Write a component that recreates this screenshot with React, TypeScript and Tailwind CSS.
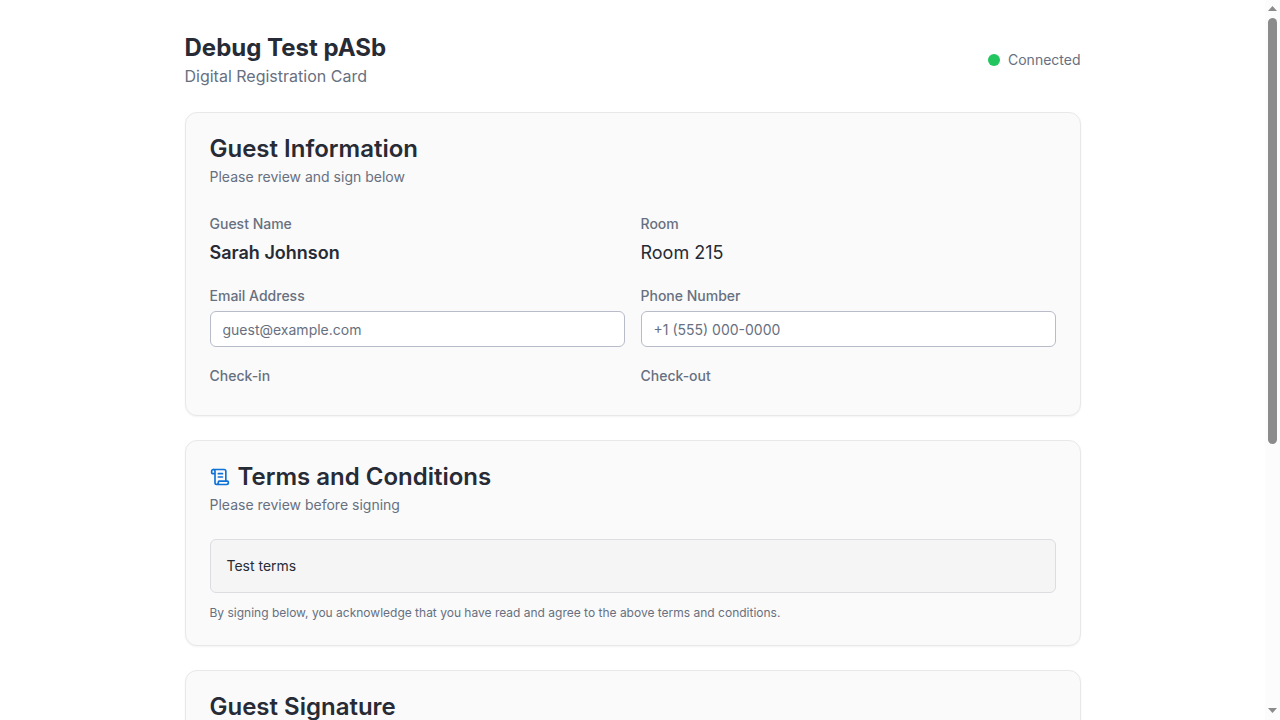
import { useEffect, useRef, useState } from "react";
import type { ReactNode } from "react";
import { ScrollText } from "lucide-react";

function Card({ title, description, icon, children }: { title: string; description?: string; icon?: ReactNode; children?: ReactNode }) {
  return (
    <section className="rounded-xl border border-[#e8e8ea] bg-[#fafafa] p-6 shadow-xs">
      <h2 className="flex items-center gap-2 text-2xl leading-none font-semibold">
        {icon}
        {title}
      </h2>
      {description && <p className="mt-1.5 text-sm text-[#677080]">{description}</p>}
      <div className="mt-6">{children}</div>
    </section>
  );
}

function Detail({ label, children }: { label: string; children?: ReactNode }) {
  return (
    <div>
      <dt>
        <span className="text-sm font-medium text-[#677080]">{label}</span>
      </dt>
      <dd className="mt-1 text-lg">{children}</dd>
    </div>
  );
}

function Field({ id, label, type, placeholder }: { id: string; label: string; type: string; placeholder: string }) {
  return (
    <div>
      <label htmlFor={id} className="text-sm font-medium text-[#677080]">
        {label}
      </label>
      <input
        id={id}
        type={type}
        placeholder={placeholder}
        className="mt-1 block h-9 w-full rounded-md border border-[#b8bbc8] bg-white px-3 text-sm placeholder:text-[#677080]"
      />
    </div>
  );
}

function Scrollbar({ size, offset }: { size: number; offset: number }) {
  return (
    <div aria-hidden="true" className="flex w-[15px] shrink-0 flex-col items-center bg-[#fcfcfc]">
      <svg className="h-[18px] w-[9px]" viewBox="0 0 9 18" fill="#8b8b8b">
        <path d="M4.5 6 9 11H0z" />
      </svg>
      <div className="min-h-0 w-[9px] flex-1">
        <div style={{ height: `${offset * 100}%` }} />
        <div className="rounded-full bg-[#8b8b8b]" style={{ height: `${size * 100}%` }} />
      </div>
      <svg className="h-[18px] w-[9px]" viewBox="0 0 9 18" fill="#8b8b8b">
        <path d="M0 6h9L4.5 11z" />
      </svg>
    </div>
  );
}

export default function App() {
  const viewport = useRef<HTMLDivElement>(null);
  const [thumb, setThumb] = useState({ size: 1, offset: 0 });

  const updateThumb = () => {
    const el = viewport.current;
    if (el) setThumb({ size: el.clientHeight / el.scrollHeight, offset: el.scrollTop / el.scrollHeight });
  };

  useEffect(() => {
    updateThumb();
    window.addEventListener("resize", updateThumb);
    return () => window.removeEventListener("resize", updateThumb);
  }, []);

  return (
    <div className="flex h-screen bg-white font-['Inter',sans-serif] text-[#272b35]">
      <div ref={viewport} onScroll={updateThumb} className="min-w-0 flex-1 overflow-y-auto px-4 py-8 [scrollbar-width:none]">
        <main className="mx-auto flex max-w-4xl flex-col gap-6">
          <header className="flex items-center justify-between">
            <div>
              <h1 className="text-2xl font-bold">Debug Test pASb</h1>
              <p className="text-[#677080]">Digital Registration Card</p>
            </div>
            <div className="flex items-center gap-2">
              <span className="size-3 rounded-full bg-[#22c55e]" />
              <span className="text-sm text-[#677080]">Connected</span>
            </div>
          </header>

          <Card title="Guest Information" description="Please review and sign below">
            <div className="flex flex-col gap-4">
              <dl className="grid grid-cols-2 gap-4">
                <Detail label="Guest Name">
                  <span className="font-semibold">Sarah Johnson</span>
                </Detail>
                <Detail label="Room">Room 215</Detail>
              </dl>
              <div className="grid grid-cols-2 gap-4">
                <Field id="email" label="Email Address" type="email" placeholder="guest@example.com" />
                <Field id="phone" label="Phone Number" type="tel" placeholder="+1 (555) 000-0000" />
              </div>
              <dl className="grid grid-cols-2 gap-4">
                <Detail label="Check-in" />
                <Detail label="Check-out" />
              </dl>
            </div>
          </Card>

          <Card
            title="Terms and Conditions"
            description="Please review before signing"
            icon={<ScrollText className="size-5 text-[#0f72d6]" />}
          >
            <div className="rounded-md border border-[#dcdde1] bg-[#f5f5f5] p-4 text-sm">Test terms</div>
            <p className="mt-3 text-xs text-[#677080]">
              By signing below, you acknowledge that you have read and agree to the above terms and conditions.
            </p>
          </Card>

          <Card title="Guest Signature">
            <canvas className="block h-89 w-full rounded-md border border-[#dcdde1] bg-white" />
          </Card>
        </main>
      </div>
      <Scrollbar size={thumb.size} offset={thumb.offset} />
    </div>
  );
}
